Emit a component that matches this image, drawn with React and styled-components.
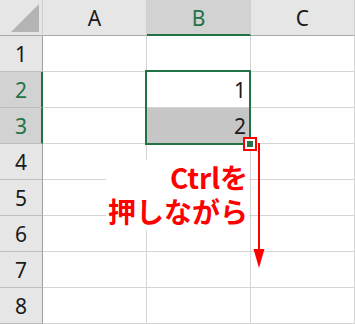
import React from "react";
import styled, { createGlobalStyle } from "styled-components";

const GREEN = "#217346";
const RED = "#ff0000";

const Global = createGlobalStyle`
  html, body { margin: 0; padding: 0; background: #ffffff; }
  body { width: 355px; height: 324px; overflow: hidden; }
  * { box-sizing: border-box; }
`;

const Sheet = styled.div`
  position: relative;
  display: grid;
  grid-template-columns: 43px 104px 104px 104px;
  grid-template-rows: repeat(9, 36px);
  width: 355px;
  height: 324px;
  font-family: "Noto Sans", "Liberation Sans", sans-serif;
  background: #ffffff;
`;

const Corner = styled.div`
  background: #e6e6e6;
  border-right: 1px solid #cfcfcf;
  border-bottom: 1px solid #a8a8a8;
  display: flex;
  align-items: flex-end;
  justify-content: flex-end;
  padding: 0 3px 3px 0;
`;

const ColHeader = styled.div`
  display: flex;
  align-items: center;
  justify-content: center;
  font-size: 21px;
  color: ${(p) => (p.$selected ? GREEN : "#1a1a1a")};
  background: ${(p) => (p.$selected ? "#d2d2d2" : "#e6e6e6")};
  border-right: 1px solid #cfcfcf;
  border-bottom: ${(p) => (p.$selected ? `2px solid ${GREEN}` : "1px solid #a8a8a8")};
  padding-top: ${(p) => (p.$selected ? "1px" : "0")};
`;

const RowHeader = styled.div`
  display: flex;
  align-items: center;
  justify-content: center;
  font-size: 21px;
  color: ${(p) => (p.$selected ? GREEN : "#1a1a1a")};
  background: ${(p) => (p.$selected ? "#d2d2d2" : "#e6e6e6")};
  border-right: ${(p) => (p.$selected ? `2px solid ${GREEN}` : "1px solid #9e9e9e")};
  border-bottom: 1px solid #bdbdbd;
  padding-left: ${(p) => (p.$selected ? "1px" : "0")};
`;

const Cell = styled.div`
  display: flex;
  align-items: center;
  justify-content: flex-end;
  padding-right: 4px;
  font-size: 21px;
  color: #1a1a1a;
  background: ${(p) => (p.$fill ? "#c6c6c6" : "#ffffff")};
  border-right: 1px solid #d4d4d4;
  border-bottom: 1px solid #d4d4d4;
`;

const Selection = styled.div`
  position: absolute;
  left: 145px;
  top: 70px;
  width: 106px;
  height: 75px;
  border: 2px solid ${GREEN};
  pointer-events: none;
`;

const HandleBox = styled.div`
  position: absolute;
  left: 243px;
  top: 137px;
  width: 14px;
  height: 14px;
  border: 2px solid ${RED};
  background: #ffffff;
  display: flex;
  align-items: center;
  justify-content: center;
`;

const Handle = styled.div`
  width: 6px;
  height: 6px;
  background: ${GREEN};
`;

const Note = styled.div`
  position: absolute;
  right: 106px;
  top: 160px;
  display: flex;
  flex-direction: column;
  align-items: flex-end;
  background: #ffffff;
  color: ${RED};
  font-family: "Noto Sans CJK JP", "Noto Sans", sans-serif;
  font-weight: 700;
  font-size: 28px;
  padding: 0 1px 2px 2px;
  white-space: nowrap;
`;

const NoteLine = styled.span`
  display: block;
  height: 34px;
  line-height: 34px;
`;

const Arrow = styled.svg`
  position: absolute;
  left: 252px;
  top: 143px;
`;

const cols = ["A", "B", "C"];
const data = { 2: { B: "1" }, 3: { B: "2" } };
const selectedRows = [2, 3];

export default function App() {
  return (
    <>
      <Global />
      <Sheet>
        <Corner>
          <svg width="28" height="28" viewBox="0 0 28 28">
            <polygon points="28,0 28,28 0,28" fill="#b4b4b4" />
          </svg>
        </Corner>
        {cols.map((c) => (
          <ColHeader key={c} $selected={c === "B"}>
            {c}
          </ColHeader>
        ))}
        {[1, 2, 3, 4, 5, 6, 7, 8].map((r) => (
          <React.Fragment key={r}>
            <RowHeader $selected={selectedRows.includes(r)}>{r}</RowHeader>
            {cols.map((c) => (
              <Cell key={c} $fill={r === 3 && c === "B"}>
                {data[r]?.[c] ?? ""}
              </Cell>
            ))}
          </React.Fragment>
        ))}
        <Selection />
        <Arrow width="14" height="127" viewBox="0 0 14 127">
          <rect x="6" y="0" width="2" height="112" fill={RED} />
          <polygon points="1.5,106 12.5,106 7,125" fill={RED} />
        </Arrow>
        <HandleBox>
          <Handle />
        </HandleBox>
        <Note>
          <NoteLine>Ctrlを</NoteLine>
          <NoteLine>押しながら</NoteLine>
        </Note>
      </Sheet>
    </>
  );
}
